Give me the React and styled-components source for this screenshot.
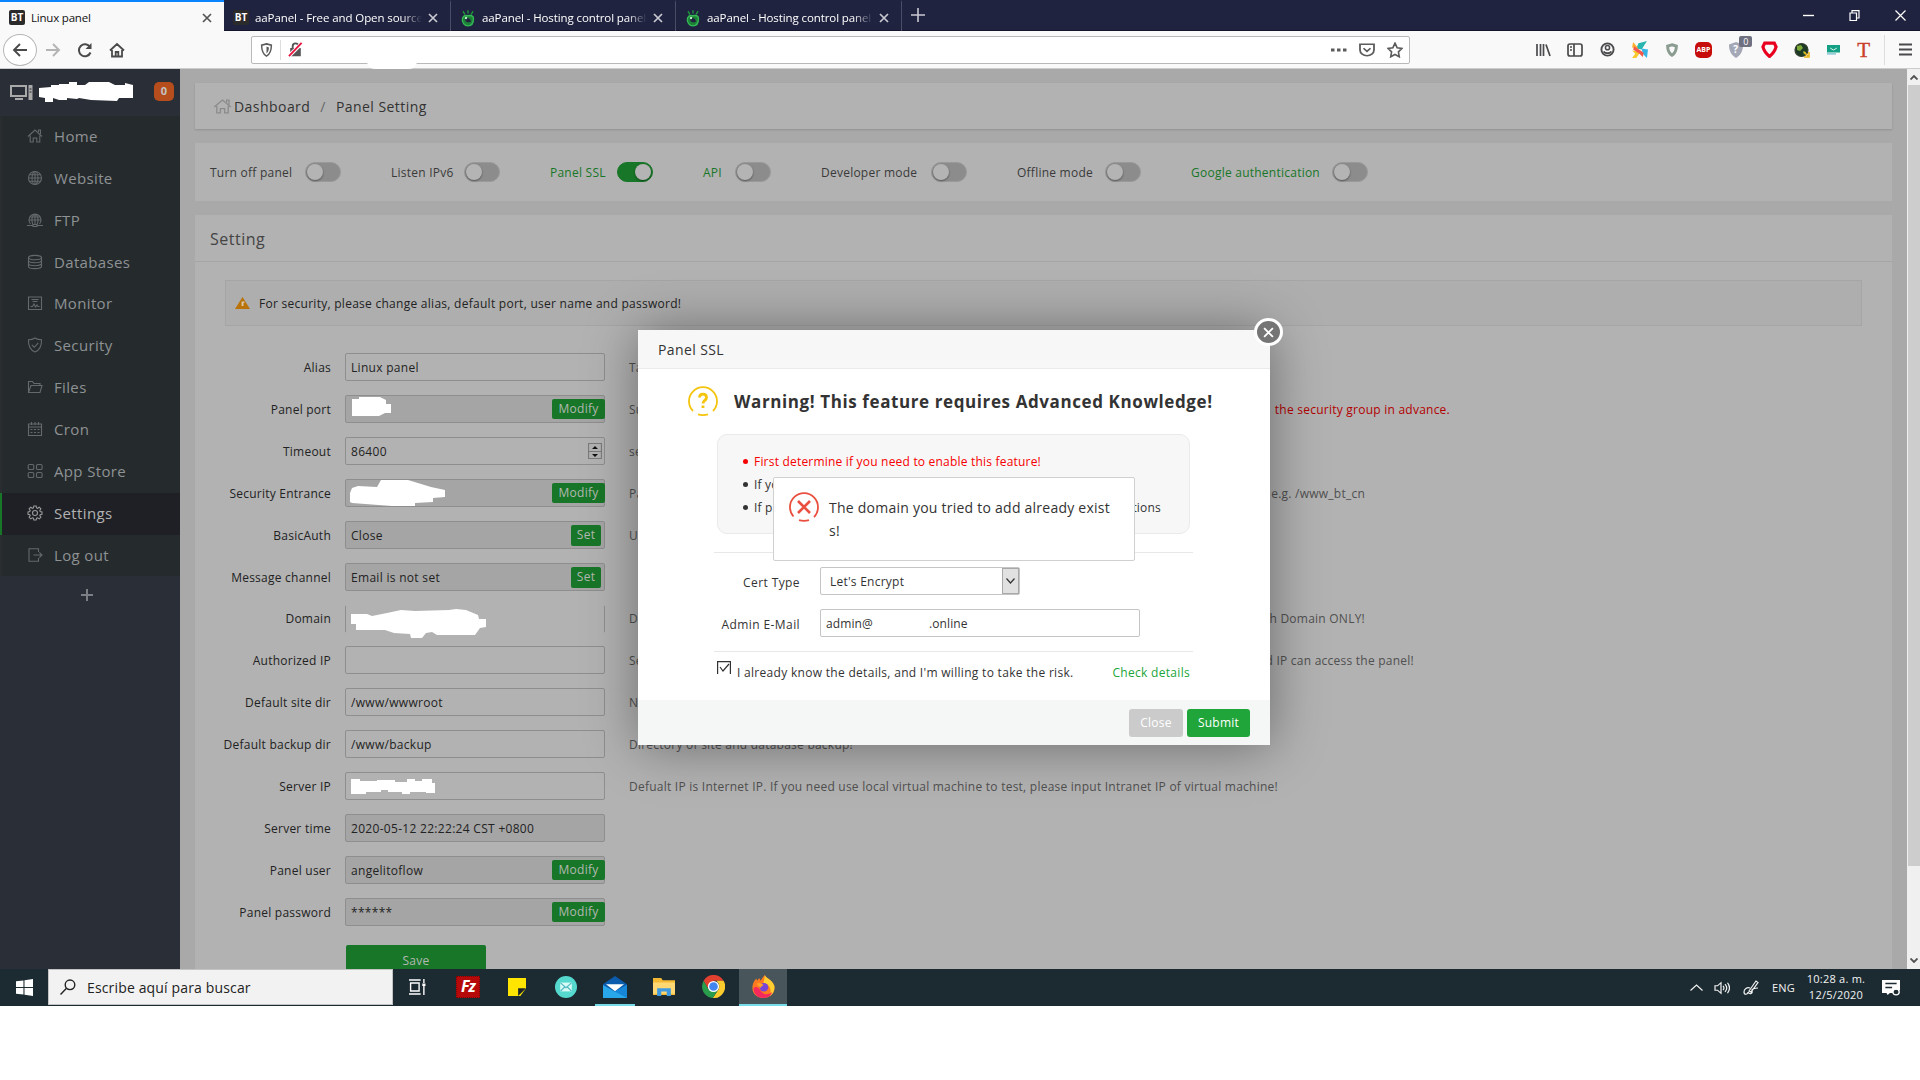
import React from "react";
import styled, { createGlobalStyle, css } from "styled-components";

const tabs = [
  { title: "Linux panel", icon: "bt", active: true, w: 224, ls: -0.2 },
  { title: "aaPanel - Free and Open source", icon: "bt", w: 227, ls: -0.1 },
  { title: "aaPanel - Hosting control panel", icon: "aa", w: 225, ls: -0.1 },
  { title: "aaPanel - Hosting control panel", icon: "aa", w: 226, ls: -0.1 },
];

const menu = [
  ["Home", "home"],
  ["Website", "globe"],
  ["FTP", "ftp"],
  ["Databases", "db"],
  ["Monitor", "monitor"],
  ["Security", "shield"],
  ["Files", "folder"],
  ["Cron", "cal"],
  ["App Store", "apps"],
  ["Settings", "gear"],
  ["Log out", "logout"],
];

const switches = [
  { label: "Turn off panel", w: 95 },
  { label: "Listen IPv6", w: 73 },
  { label: "Panel SSL", w: 67, green: true, on: true },
  { label: "API", w: 32, green: true },
  { label: "Developer mode", w: 110 },
  { label: "Offline mode", w: 88 },
  { label: "Google authentication", w: 141, green: true },
];

const rows = [
  { label: "Alias", value: "Linux panel", hint: "Take an alias" },
  {
    label: "Panel port",
    mask: "7,4 14,4 14,2 35,2 41,5 41,9 46,9 46,18 40,18 34,21 7,21",
    grey: true,
    button: "Modify",
    hint: "Suggested",
    tail: "the security group in advance.",
    tailW: 821,
    red: true,
  },
  { label: "Timeout", value: "86400", spin: true, hint: "seconds" },
  {
    label: "Security Entrance",
    mask: "5,14 7,9 13,7 32,8 36,1 63,1 86,8 100,11 100,18 88,19 88,23 70,24 70,27 47,27 7,24 5,23",
    grey: true,
    button: "Modify",
    hint: "Panel",
    tail: "e.g. /www_bt_cn",
    tailW: 736,
  },
  { label: "BasicAuth", value: "Close", grey: true, set: true, hint: "User" },
  { label: "Message channel", value: "Email is not set", grey: true, set: true },
  {
    label: "Domain",
    mask: "6,9 22,9 27,11 42,8 56,5 70,6 104,5 111,4 121,5 133,10 134,14 141,14 141,22 135,23 130,30 92,30 87,27 81,28 77,33 66,33 65,29 49,28 40,25 11,25 11,19 6,19",
    open: true,
    hint: "Domain",
    tail: "with Domain ONLY!",
    tailW: 736,
  },
  { label: "Authorized IP", hint: "Set", tail: "authorized IP can access the panel!", tailW: 785 },
  { label: "Default site dir", value: "/www/wwwroot", hint: "New" },
  { label: "Default backup dir", value: "/www/backup", hint: "Directory of site and database backup!" },
  {
    label: "Server IP",
    mask: "6,7 15,7 15,9 32,9 32,8 50,8 50,10 62,10 62,7 70,7 70,9 77,9 77,7 87,7 87,11 90,11 90,21 81,21 81,20 65,20 65,22 57,22 57,20 43,20 43,18 36,18 36,20 21,20 21,22 6,22",
    hint: "Defualt IP is Internet IP. If you need use local virtual machine to test, please input Intranet IP of virtual machine!",
  },
  { label: "Server time", value: "2020-05-12 22:22:24 CST +0800", grey: true },
  { label: "Panel user", value: "angelitoflow", grey: true, button: "Modify" },
  { label: "Panel password", value: "******", grey: true, button: "Modify" },
];

const Icon = ({ w = 16, h = w, box = "0 0 16 16", sw = 1.2, children, ...rest }) => (
  <svg
    width={w}
    height={h}
    viewBox={box}
    fill="none"
    stroke="currentColor"
    strokeWidth={sw}
    preserveAspectRatio="none"
    {...rest}
  >
    {children}
  </svg>
);

const menuPaths = {
  home: <path d="M1 8.5L8 2l7 6.5M3.2 7.5V14h3v-4h3.6v4h3V7.5M11.5 4V2h2v4" />,
  globe: (
    <>
      <circle cx="8" cy="8" r="6.5" />
      <ellipse cx="8" cy="8" rx="3" ry="6.5" />
      <path d="M8 1.5v13M1.5 8h13M2.5 4.8h11M2.5 11.2h11" />
    </>
  ),
  ftp: (
    <path d="M3.5 12A6 6 0 1 1 12.5 12M5.7 12c-1.3-4-1-8 2.3-10 3.3 2 3.6 6 2.3 10M8 2v10M2.5 8h11M3.5 5h9M0 13.5h6M10 13.5h6M6 12.5h4v2H6z" />
  ),
  db: (
    <>
      <ellipse cx="8" cy="3.6" rx="6.5" ry="2.2" />
      <path d="M1.5 3.6v8.8c0 1.2 3 2.2 6.5 2.2s6.5-1 6.5-2.2V3.6M1.5 6.6c0 1.2 3 2.2 6.5 2.2s6.5-1 6.5-2.2M1.5 9.5c0 1.2 3 2.2 6.5 2.2s6.5-1 6.5-2.2" />
    </>
  ),
  monitor: <path d="M1.5 2h13v12.5h-13zM4.5 4.5h7M5.5 6.5h5M3.5 11.5h2l1.5-2.5 1.5 3 1.5-2 1 1.5h1.5" />,
  shield: <path d="M8 1c2 1.3 4 1.8 6.5 1.8C14.8 9 13 13 8 15 3 13 1.2 9 1.5 2.8 4 2.8 6 2.3 8 1zM4.8 7.8l2.5 2.5 4-4.5" />,
  folder: <path d="M1.5 13.5v-11h4l1.5 2h6v2M1.5 13.5l2.5-7h11l-2 7z" />,
  cal: <path d="M1.5 3h13v11.5h-13zM1.5 6h13M4.5 1v3M8 1v3M11.5 1v3M3.5 8.5h2M7 8.5h2M10.5 8.5h2M3.5 11.5h2M7 11.5h2M10.5 11.5h2" />,
  apps: (
    <>
      <rect x="1.2" y="1.5" width="5.6" height="5" rx="1.3" />
      <rect x="9.5" y="1.5" width="5.6" height="5" rx="1.3" />
      <rect x="1.2" y="9.5" width="5.6" height="5" rx="1.3" />
      <rect x="9.5" y="9.5" width="5.6" height="5" rx="1.3" />
    </>
  ),
  gear: (
    <>
      <path d="M6.8 1h2.4l.4 1.9 1 .4 1.7-1.1 1.6 1.6-1.1 1.7.4 1 1.8.4v2.3l-1.8.4-.4 1 1.1 1.7-1.6 1.6-1.7-1.1-1 .4L9.2 15H6.8l-.4-1.8-1-.4-1.7 1.1-1.6-1.6 1.1-1.7-.4-1L1 9.2V6.9l1.8-.4.4-1-1.1-1.7 1.6-1.6 1.7 1.1 1-.4z" />
      <circle cx="8" cy="8" r="2.5" />
    </>
  ),
  logout: <path d="M11.5 5V1.8H2v12.4h9.5V11M6.5 8h8.5M12.3 5.3L15 8l-2.7 2.7" />,
};

const AaLogo = () => (
  <Icon w={16} h={18} sw={1.3}>
    <path d="M3 2l2 3M8 1v3M13 2l-2 3" stroke="#1d9a3c" />
    <path d="M2.5 8c1-2 3-2.5 5-2 3-.8 6 0 6 2.5 0 4-2 6.5-5.5 6.5s-6.5-3-5.500-7z" fill="#1b8236" stroke="#35b957" />
    <path d="M5 9.500c1 2.500 4 3 6 1.500-1-3-4-4-6-1.500z" fill="#20223f" stroke="none" />
    <circle cx="6" cy="8" r="1.2" fill="#b8e8c2" stroke="none" />
  </Icon>
);

const Close = ({ s = 10 }) => (
  <Icon w={s} h={s} box="0 0 10 10" sw={1.7}>
    <path d="M1 1l8 8M9 1L1 9" />
  </Icon>
);

function Browser() {
  return (
    <>
      <TabBar>
        {tabs.map((t, i) => (
          <Tab key={i} $active={t.active} $w={t.w}>
            {t.icon === "bt" ? <BtLogo>BT</BtLogo> : <AaLogo />}
            <TabTitle $ls={t.ls} $fade={!t.active}>{t.title}</TabTitle>
            <Close />
          </Tab>
        ))}
        <NewTab>
          <Icon w={14} box="0 0 14 14" sw={1.6}><path d="M7 0v14M0 7h14" /></Icon>
        </NewTab>
        <WindowButtons>
          <Icon w={11}><path d="M0 8h16" strokeWidth="2" /></Icon>
          <Icon w={11} box="0 0 11 11"><path d="M1 3h6.5v7.5H1zM3 3V.7h7V8H7.5" /></Icon>
          <Icon w={11} box="0 0 11 11"><path d="M.5.5l10 10M10.5.5l-10 10" /></Icon>
        </WindowButtons>
      </TabBar>
      <NavBar>
        <BackButton>
          <Icon w={16} sw={1.9}><path d="M15 8H2M8 2L2 8l6 6" /></Icon>
        </BackButton>
        <NavIcon $w={32} $c="#b4b4b4">
          <Icon w={16} sw={1.9}><path d="M1 8h13M8 2l6 6-6 6" /></Icon>
        </NavIcon>
        <NavIcon $w={32}>
          <Icon w={16} sw={2}><path d="M13.5 10.5A6 6 0 1 1 13 5" /><path d="M14.5 1v6h-6z" fill="currentColor" stroke="none" /></Icon>
        </NavIcon>
        <NavIcon $w={32}>
          <Icon w={16} sw={1.8}><path d="M1 8.5L8 2l7 6.5M3 8v6.5h10V8M6.7 14v-4h2.6v4" /></Icon>
        </NavIcon>
        <UrlBar>
          <Icon w={13} h={14} sw={1.8}><path d="M8 1l6 1.5c0 6-1.5 10-6 12.5C3.5 12.5 2 8.5 2 2.5z" /><path d="M8 4v8c2-2 3-4 3-7z" fill="currentColor" stroke="none" /></Icon>
          <UrlSplit />
          <Icon w={15} h={15}>
            <path d="M3 7h10v7.5H3z" fill="#555" stroke="#555" />
            <path d="M5 7V4.5a3 3 0 0 1 6 0V7" stroke="#555" strokeWidth="2" />
            <path d="M1 15L15 1" stroke="#fff" strokeWidth="4" />
            <path d="M1 15L14.5 1" stroke="#e8133f" strokeWidth="2" />
          </Icon>
          <UrlMask />
          <UrlActions>
            <Icon w={16} h={4} box="0 0 16 4"><path d="M0 2h3.5M6 2h3.5M12 2h3.5" strokeWidth="3.2" /></Icon>
            <Icon w={16} h={14} sw={1.8}><path d="M1 1.5h14V8c0 4-3.5 6.5-7 6.5S1 12 1 8zM4.5 6L8 9.5 11.5 6" /></Icon>
            <Icon w={16} h={16} sw={1.6}><path d="M8 1.2l2.1 4.5 4.9.7-3.6 3.5.9 4.9L8 12.5l-4.3 2.3.9-4.9L1 6.4l4.9-.7z" /></Icon>
          </UrlActions>
        </UrlBar>
        <Extensions>
          <Icon sw={1.7}><path d="M2 2v12M5.5 2v12M8.5 2v12M11 2.5L15 14" /></Icon>
          <Icon sw={1.7}><rect x="1" y="2" width="14" height="12" rx="2" /><path d="M7 2v12M3 5h2M3 8h2" /></Icon>
          <Icon w={15} sw={2}><circle cx="8" cy="8" r="6.5" /><circle cx="8" cy="6" r="2.2" strokeWidth="1.6" /><path d="M4 10c1 2.500 7 2.500 8 0" strokeWidth="1.800" /></Icon>
          <Icon w={17} stroke="none"><path d="M15 0L7 2 5 7l5 1z" fill="#29b6b0" /><path d="M2 1l5 6-6-1z" fill="#ffb02e" /><path d="M10 7l6 1-1 8-4-4z" fill="#36b5e6" /><path d="M1 9l8 1-4 6H1l3-4z" fill="#f8c92c" /><path d="M3 5l9 6-1 4-3-3-6-4z" fill="#f4594e" /></Icon>
          <Icon w={14} sw={3.4}><path d="M8 2l5 1.5c0 5-1 8-5 10.5-4-2.5-5-5.5-5-10.5z" stroke="#8b9c91" /></Icon>
          <Abp>ABP</Abp>
          <ShieldWrap>
            <Icon w={16} stroke="none"><path d="M8 0l7 2.5C15 9 13 13 8 16 3 13 1 9 1 2.5z" fill="#a4a8b6" /></Icon>
            <ShieldMark>?</ShieldMark>
            <Counter>0</Counter>
          </ShieldWrap>
          <Icon w={17} sw={3}><path d="M3.5 2h9l1.7 3.5c-1 3.5-3 6.5-6.2 9-3.2-2.5-5.2-5.5-6.2-9z" stroke="#e8001e" /></Icon>
          <Icon w={16}><circle cx="7.5" cy="8" r="6.5" fill="#1c3a26" stroke="#33402c" /><path d="M3 4l4-1 2 3-3 3-3-1zM9 9l3 1-2 3z" fill="#7da936" stroke="none" /><path d="M10 10l4 4M15 10v5h-5" stroke="#eab71c" strokeWidth="1.6" /></Icon>
          <Icon w={13} h={10}><path d="M0 0h16v12H0z" fill="#14a085" stroke="none" /><path d="M4 5l4 3 4-3" stroke="#fff" /><path d="M0 14h11" stroke="#94ccd9" strokeWidth="3" /></Icon>
          <LetterT>T</LetterT>
        </Extensions>
        <Burger>
          <Icon w={13} h={13} box="0 0 13 13"><path d="M0 1.5h13M0 6.5h13M0 11.5h13" strokeWidth="2" /></Icon>
        </Burger>
      </NavBar>
    </>
  );
}

function Sidebar() {
  return (
    <Side>
      <SideHead>
        <Icon w={23} h={15} box="0 0 23 15" sw={2} color="#a9a9aa">
          <path d="M1 1h15v10H1zM5 14h8" />
          <path d="M18.5 0h4v15h-4z" fill="currentColor" stroke="none" />
          <path d="M19.5 4h2M19.5 7h2" stroke="#2a2e36" strokeWidth="1" />
        </Icon>
        <svg width="94" height="20">
          <polygon
            fill="#fff"
            points="0,6 12,5 12,3 20,3 20,2 30,2 30,0 38,0 38,3 46,3 50,0 70,0 76,3 86,3 86,1 94,3 94,16 80,16 78,19 52,18 40,16 38,17 28,16 28,18 20,18 14,16 14,20 6,20 6,16 0,15"
          />
        </svg>
        <Badge>0</Badge>
      </SideHead>
      <Menu>
        {menu.map(([name, icon]) => (
          <MenuItem key={name} $active={name === "Settings"}>
            <Icon w={16} h={16} sw={1.1}>{menuPaths[icon]}</Icon>
            <span>{name}</span>
          </MenuItem>
        ))}
      </Menu>
      <AddMenu>
        <Icon w={12} box="0 0 12 12" sw={2}><path d="M6 0v12M0 6h12" /></Icon>
      </AddMenu>
    </Side>
  );
}

function SettingRow({ row }) {
  return (
    <Row $open={row.open}>
      <Label>{row.label}</Label>
      <Field $grey={row.grey} $open={row.open}>
        <span>{row.value}</span>
        {row.mask && (
          <Mask width="150" height="36">
            <polygon points={row.mask} fill="#fff" />
          </Mask>
        )}
        {row.button && <FieldButton>{row.button}</FieldButton>}
        {row.set && <FieldButton $set>Set</FieldButton>}
        {row.spin && (
          <Spin>
            <Icon w={14} h={16} box="0 0 14 16">
              <path d="M.5.5h13v15H.5zM0 8.5h14" stroke="#7b7b7b" />
              <path d="M4 6h6L7 3zM4 11h6l-3 3z" fill="#111" stroke="none" />
            </Icon>
          </Spin>
        )}
      </Field>
      <Hint $w={row.tailW}>
        <span>{row.hint}</span>
        {row.tail && <Tail $red={row.red}>{row.tail}</Tail>}
      </Hint>
    </Row>
  );
}

function SslDialog() {
  return (
    <Dialog>
      <DialogHead>Panel SSL</DialogHead>
      <DialogClose><Close s={11} /></DialogClose>
      <DialogBody>
        <WarnTitle>
          <Icon w={30} h={30} box="0 0 30 30" sw={1.8} color="#f5c40c">
            <path d="M5 25A14 14 0 1 1 25 25M10 28.3q5 1.6 10 0" />
            <path d="M11.5 11.5c0-4.5 7-4.5 7 0 0 3-3.5 2.8-3.5 6M15 19.5v2.5" strokeWidth="2.8" />
          </Icon>
          <h3>Warning! This feature requires Advanced Knowledge!</h3>
        </WarnTitle>
        <Notes>
          <Note $red>First determine if you need to enable this feature!</Note>
          <Note>If you</Note>
          <Note><span>If pa</span><NoteEnd>options</NoteEnd></Note>
        </Notes>
        <Rule />
        <FormLine>
          <FormLabel>Cert Type</FormLabel>
          <Select>
            Let's Encrypt
            <Arrow><Icon w={9} h={6} box="0 0 9 6"><path d="M.5.5l4 4.5 4-4.5" /></Icon></Arrow>
          </Select>
        </FormLine>
        <FormLine>
          <FormLabel>Admin E-Mail</FormLabel>
          <Email><span>admin@</span><span>.online</span></Email>
        </FormLine>
        <Rule />
        <Agree>
          <Icon w={14} h={14} box="0 0 14 14"><path d="M.6 13V.6h12.8V13M3 6l3 4 6-7" /></Icon>
          <span>I already know the details, and I'm willing to take the risk.</span>
          <a>Check details</a>
        </Agree>
      </DialogBody>
      <DialogFoot>
        <FootButton $w={54} $bg="#cbcbcb">Close</FootButton>
        <FootButton $w={63} $bg="#20a53a">Submit</FootButton>
      </DialogFoot>
      <Toast>
        <Icon w={30} h={30} box="0 0 30 30" sw={1.8} color="#e9503f">
          <path d="M4.5 24.5A14 14 0 1 1 25 25M10 28.2q5 1.5 10 0" />
          <path d="M9 9l12 12M21 9L9 21" strokeWidth="2.6" />
        </Icon>
        <p>The domain you tried to add already exist<br />s!</p>
      </Toast>
    </Dialog>
  );
}

function Taskbar() {
  return (
    <Bar>
      <Start>
        <Icon w={17} h={17} stroke="none"><path d="M0 2.2L7 1.3v6.2H0zM8 1.1L16 0v7.5H8zM0 8.5h7v6.2l-7-.9zM8 8.5h8V16l-8-1.1z" fill="#fff" /></Icon>
      </Start>
      <Search>
        <Icon w={16} h={16} sw={1.4}><circle cx="10" cy="5.8" r="4.8" /><path d="M6.5 9.3L.5 15.5" /></Icon>
        <span>Escribe aquí para buscar</span>
      </Search>
      <Apps>
        <TaskApp $w={48}>
          <Icon w={17} h={16} color="#fff"><path d="M0 1h11M0 15h11M1.5 4h8v8h-8zM14 0v4M14 7v9" strokeWidth="1.3" /><path d="M12.5 4.5h3V7h-3z" fill="#fff" stroke="none" /></Icon>
        </TaskApp>
        <TaskApp $w={54}><FileZilla>Fz</FileZilla></TaskApp>
        <TaskApp $w={44}>
          <Icon w={18} h={18} stroke="none"><path d="M0 0h16v9l-5 7H0z" fill="#ffe500" /><path d="M9 16V9h7z" fill="#1b2529" /></Icon>
        </TaskApp>
        <TaskApp $w={54}>
          <Icon w={22} h={22}><circle cx="8" cy="8" r="8" fill="#55d9cf" stroke="none" /><path d="M3.8 4.8h8.4v6.4H3.8z" fill="#d9fbf6" stroke="none" /><path d="M4 5l4 3.5L12 5M4 11l3-3M12 11L9 8" stroke="#4fb9c0" strokeWidth=".9" /></Icon>
        </TaskApp>
        <TaskApp $w={40} $open $gap={2}>
          <Icon w={24} h={22} stroke="none"><path d="M0 6l8-6 8 6v9H0z" fill="#0b5cad" /><path d="M2 6h12L8 11z" fill="#fff" /><path d="M0 6.5l8 5 8-5V16H0z" fill="#28a8ea" /><path d="M8 11.5l8-5V16z" fill="#1686d9" /></Icon>
        </TaskApp>
        <TaskApp $w={54} $gap={2}>
          <Icon w={22} h={18} stroke="none"><path d="M0 0h6l1 2h9v13H0z" fill="#f5ba33" /><path d="M0 4h16v10H0z" fill="#ffd874" /><path d="M3 16V9h10v7h-3v-4H6v4z" fill="#3f9ae0" /></Icon>
        </TaskApp>
        <TaskApp $w={45}>
          <Icon w={23} h={23} stroke="none"><path d="M1.1 4A8 8 0 0 1 15 4H8L4.6 10z" fill="#e2412f" /><path d="M15 4a8 8 0 0 1-7.5 12l4-6c1-2 .5-4-1.5-6z" fill="#fccb2e" /><path d="M1.1 4A8 8 0 0 0 7.5 16l3.8-6H4.6z" fill="#2a9d4c" /><circle cx="8" cy="8" r="3.9" fill="#fff" /><circle cx="8" cy="8" r="3" fill="#4284f0" /></Icon>
        </TaskApp>
        <TaskApp $w={48} $open $active $gap={3}>
          <Icon w={23} h={23} stroke="none"><path d="M5 2l1 2c1-2 2-3 3-4 0 2 5 3 6.5 7.5C16.5 12 13 16 8 16S0 12.5.3 8.5C.5 6 1.5 4 3 2.5L3.5 4z" fill="#ff7a1e" /><path d="M9 0c0 2 5 3 6.5 7.5.5 3-1 6-3 7 1.5-5-.5-8-4.5-9z" fill="#ffcf32" /><path d="M1 9c0 4 3 7 7 7 3 0 5.5-2 6-4-3 2-6 2-8-1S3 8 1 9z" fill="#f5295d" /><circle cx="8.3" cy="8.5" r="3" fill="#7744d8" /><path d="M3 6c2-1 4 0 5 1-1 1-2 1-2 2z" fill="#ffa02b" /></Icon>
        </TaskApp>
      </Apps>
      <Tray>
        <Icon w={13} h={7} box="0 0 13 7"><path d="M.5 6.5l6-5.5 6 5.5" /></Icon>
        <Icon w={16} h={14}><path d="M1 5.5h2.5L7 2v12L3.5 10.5H1zM9 5.5q2 2.5 0 5M11 3.5q3.5 4.5 0 9M13.5 2q4 6 0 12" /></Icon>
        <Icon w={16} h={16}><path d="M7 8c-3-1-6 1-6 4s4 3 4 0M6 11l7-10 2 1.5-7 9.5zM5 12c2 3 5 1 4-1s3-3 6-3" /></Icon>
        <Lang>ENG</Lang>
        <Clock><span>10:28 a. m.</span><span>12/5/2020</span></Clock>
        <Icon w={18} h={16} stroke="none">
          <path d="M0 0h16v10l-4 2-3 1H7l-2 2-1-2H0z" fill="#fff" />
          <path d="M3 3.5h10M3 7.5h6" stroke="#1c2a32" strokeWidth="1.3" />
          <circle cx="12.5" cy="12" r="2.8" fill="#1c2a32" stroke="#fff" />
        </Icon>
      </Tray>
    </Bar>
  );
}

export default function App() {
  return (
    <Screen>
      <Global />
      <Browser />
      <Page>
        <Sidebar />
        <Main>
          <Crumbs>
            <Icon w={19} h={17} color="#8b8b8b" sw={1.1}>{menuPaths.home}</Icon>
            <span>Dashboard</span>
            <Slash>/</Slash>
            <span>Panel Setting</span>
          </Crumbs>
          <SwitchCard>
            {switches.map((s) => (
              <SwitchItem key={s.label}>
                <SwitchLabel $w={s.w} $green={s.green}>{s.label}</SwitchLabel>
                <Toggle $on={s.on} />
              </SwitchItem>
            ))}
          </SwitchCard>
          <SettingCard>
            <CardTitle>Setting</CardTitle>
            <Alert>
              <Icon w={15} h={12} stroke="none"><path d="M8 0l8 16H0z" fill="#b97308" /><path d="M7 6h3v2H9v4H7z" fill="#d9c9a8" /></Icon>
              For security, please change alias, default port, user name and password!
            </Alert>
            <Rows>
              {rows.map((r) => <SettingRow key={r.label} row={r} />)}
            </Rows>
            <Save>Save</Save>
          </SettingCard>
        </Main>
        <Scrollbar>
          <Icon w={8} h={5} box="0 0 8 5" sw={1.8}><path d="M.5 4.5L4 1l3.5 3.5" /></Icon>
          <Thumb />
          <Icon w={8} h={5} box="0 0 8 5" sw={1.8}><path d="M.5.5L4 4 7.5.5" /></Icon>
        </Scrollbar>
        <SslDialog />
      </Page>
      <Taskbar />
    </Screen>
  );
}

// Styled Components
const Global = createGlobalStyle`
  * { box-sizing: border-box; }
  body {
    margin: 0;
    background: #fff;
    font-family: "Open Sans", "Noto Sans", sans-serif;
    font-size: 12px;
    letter-spacing: 0.24px;
    overflow: hidden;
  }
  svg { display: block; flex-shrink: 0; }
  h3, p { margin: 0; }
`;

const Screen = styled.div`
  width: 1920px;
  height: 1080px;
  display: flex;
  flex-direction: column;
  white-space: nowrap;
`;

const TabBar = styled.div`
  height: 31px;
  flex-shrink: 0;
  display: flex;
  background: #202340;
  border-bottom: 1px solid #14152a;
  color: #fff;
`;

const Tab = styled.div`
  width: ${(p) => p.$w}px;
  height: 31px;
  display: flex;
  align-items: center;
  padding: 2px 12px 0 9px;
  gap: 6px;
  border-top: 2px solid transparent;
  border-right: 1px solid #4b4d66;
  svg:last-child { color: #c9c9d2; }
  ${(p) =>
    p.$active &&
    css`
      background: #f9f9fa;
      color: #111;
      border-top-color: #0a84ff;
      border-right: 0;
      svg:last-child { color: #555; }
    `}
`;

const BtLogo = styled.div`
  width: 16px;
  height: 15px;
  flex-shrink: 0;
  border-radius: 2px;
  background: #2b2b2b;
  color: #fff;
  font: bold 10px/15px "Open Sans", sans-serif;
  letter-spacing: 0;
  text-align: center;
`;

const TabTitle = styled.span`
  flex: 1;
  overflow: hidden;
  font-size: 11.5px;
  letter-spacing: ${(p) => p.$ls}px;
  ${(p) => p.$fade && "mask-image: linear-gradient(to right, #000 88%, transparent);"}
`;

const NewTab = styled.div`
  width: 32px;
  display: grid;
  place-items: center;
  color: #c9c9d2;
`;

const WindowButtons = styled.div`
  margin-left: auto;
  padding-right: 14px;
  display: flex;
  align-items: center;
  gap: 35px;
`;

const NavBar = styled.div`
  height: 38px;
  flex-shrink: 0;
  display: flex;
  align-items: center;
  background: #f9f9fa;
  border-bottom: 1px solid #ccc;
  color: #4a4a4c;
  padding-left: 3px;
`;

const BackButton = styled.div`
  width: 34px;
  height: 32px;
  border: 1px solid #b5b5b5;
  border-radius: 50%;
  background: #fff;
  display: grid;
  place-items: center;
`;

const NavIcon = styled.div`
  width: ${(p) => p.$w}px;
  color: ${(p) => p.$c || "inherit"};
  display: grid;
  place-items: center;
`;

const UrlBar = styled.div`
  position: relative;
  width: 1159px;
  height: 28px;
  margin-left: 118px;
  padding: 0 6px 0 8px;
  background: #fff;
  border: 1px solid #b9b9bb;
  border-radius: 2px;
  display: flex;
  align-items: center;
  color: #5b5b5d;
`;

const UrlSplit = styled.div`
  width: 1px;
  height: 20px;
  margin: 0 7px;
  background: #ddd;
`;

const UrlMask = styled.div`
  position: absolute;
  left: 115px;
  top: 24px;
  width: 50px;
  height: 8px;
  background: #fff;
  border-radius: 0 0 14px 14px;
`;

const UrlActions = styled.div`
  margin-left: auto;
  display: flex;
  align-items: center;
  gap: 12px;
`;

const Extensions = styled.div`
  margin-left: auto;
  width: 337px;
  display: flex;
  align-items: center;
  justify-content: space-between;
`;

const Abp = styled.div`
  width: 17px;
  height: 16px;
  border-radius: 5px;
  background: #c70d0a;
  color: #fff;
  font: bold 7px/16px "Open Sans", sans-serif;
  letter-spacing: 0;
  text-align: center;
`;

const ShieldWrap = styled.div`
  position: relative;
  width: 16px;
`;

const ShieldMark = styled.span`
  position: absolute;
  left: 5px;
  top: 1px;
  color: #fff;
  font-size: 10px;
  font-weight: bold;
  line-height: 13px;
`;

const Counter = styled.span`
  position: absolute;
  left: 11px;
  top: -6px;
  width: 13px;
  height: 11px;
  border-radius: 2px;
  background: #6f7080;
  color: #fff;
  font-size: 9px;
  line-height: 11px;
  text-align: center;
`;

const LetterT = styled.span`
  width: 16px;
  text-align: center;
  color: #c9402a;
  font: 21px/18px "Liberation Serif", serif;
  -webkit-text-stroke: 0.4px #c9402a;
`;

const Burger = styled.div`
  width: 36px;
  height: 30px;
  margin-left: 12px;
  padding-left: 5px;
  border-left: 1px solid #ddd;
  display: grid;
  place-items: center;
`;

const Page = styled.div`
  position: relative;
  height: 900px;
  flex-shrink: 0;
  display: flex;
  overflow: hidden;
  background: #a9a9a9;
`;

const Side = styled.div`
  width: 180px;
  background: #2a2e36;
  flex-shrink: 0;
`;

const SideHead = styled.div`
  height: 47px;
  padding: 0 6px 1px 10px;
  display: flex;
  align-items: center;
  gap: 6px;
`;

const Badge = styled.div`
  width: 20px;
  height: 19px;
  margin: 0 0 1px auto;
  border-radius: 5px;
  background: #b54e1c;
  color: #c4c4c4;
  font-size: 11px;
  font-weight: bold;
  line-height: 18px;
  text-align: center;
`;

const Menu = styled.div`
  background: #252a2d;
`;

const MenuItem = styled.div`
  height: 41.87px;
  display: flex;
  align-items: center;
  gap: 11px;
  padding: 0 0 2px 25px;
  border-left: 2px solid ${(p) => (p.$active ? "#187628" : "#2a2d30")};
  background: ${(p) => (p.$active ? "#1e2025" : "transparent")};
  color: ${(p) => (p.$active ? "#b2b2b2" : "#8e9294")};
  font-size: 15px;
  letter-spacing: 0.35px;
  svg { color: ${(p) => (p.$active ? "#999" : "#65696b")}; }
`;

const AddMenu = styled.div`
  height: 38px;
  padding-right: 6px;
  display: grid;
  place-items: center;
  color: #7c7f84;
`;

const Main = styled.div`
  width: 1697px;
  margin-left: 15px;
  padding-top: 14px;
  display: flex;
  flex-direction: column;
  gap: 14px;
`;

const Card = styled.div`
  background: #b2b2b2;
  flex-shrink: 0;
  color: #333;
`;

const Crumbs = styled(Card)`
  height: 46px;
  padding-left: 18px;
  box-shadow: 0 1px 2px rgba(0, 0, 0, 0.15);
  display: flex;
  align-items: center;
  font-size: 14px;
  letter-spacing: 0.45px;
  svg { margin-right: 2px; }
`;

const Slash = styled.span`
  margin: 0 10px;
  color: #666;
`;

const SwitchCard = styled(Card)`
  height: 58px;
  padding-left: 15px;
  display: flex;
  align-items: center;
  gap: 50px;
`;

const SwitchItem = styled.div`
  display: flex;
  align-items: center;
`;

const SwitchLabel = styled.span`
  width: ${(p) => p.$w}px;
  color: ${(p) => (p.$green ? "#187628" : "#3a3a3a")};
`;

const Toggle = styled.div`
  width: 36px;
  height: 20px;
  padding: 1px;
  border-radius: 10px;
  border: 1px solid ${(p) => (p.$on ? "#187628" : "#999")};
  background: ${(p) => (p.$on ? "#187628" : "#8c8c8c")};
  display: flex;
  justify-content: ${(p) => (p.$on ? "flex-end" : "flex-start")};
  &::before {
    content: "";
    width: 16px;
    height: 16px;
    border-radius: 50%;
    background: #b4b4b4;
    box-shadow: 0 1px 2px rgba(0, 0, 0, 0.4);
  }
`;

const SettingCard = styled(Card)`
  height: 800px;
`;

const CardTitle = styled.div`
  height: 47px;
  padding-left: 15px;
  border-bottom: 1px solid #a5a5a5;
  color: #444;
  font-size: 16px;
  line-height: 49px;
  letter-spacing: 0.5px;
`;

const Alert = styled.div`
  height: 46px;
  margin: 18px 30px 27px;
  padding-left: 9px;
  border: 1px solid #a5a5a5;
  background: #aeaeae;
  display: flex;
  align-items: center;
  gap: 9px;
  color: #222;
  letter-spacing: 0.27px;
`;

const Rows = styled.div`
  display: flex;
  flex-direction: column;
  gap: 14px;
`;

const Row = styled.div`
  height: ${(p) => (p.$open ? 27 : 28)}px;
  display: flex;
  align-items: center;
`;

const Label = styled.div`
  width: 136px;
  margin-right: 14px;
  text-align: right;
  color: #222;
`;

const Field = styled.div`
  position: relative;
  width: 260px;
  height: 28px;
  padding: 0 0 0 5px;
  border: 1px solid #8e8e8e;
  border-radius: 2px;
  background: ${(p) => (p.$grey ? "#a5a5a5" : "#b2b2b2")};
  color: #222;
  display: flex;
  align-items: center;
  letter-spacing: 0.3px;
  ${(p) => p.$open && "border-top-color: transparent; border-bottom-color: transparent;"}
`;

const Mask = styled.svg`
  position: absolute;
  left: -1px;
  top: -1px;
`;

const FieldButton = styled.div`
  width: ${(p) => (p.$set ? 30 : 53)}px;
  height: ${(p) => (p.$set ? 21 : 20)}px;
  margin: 0 ${(p) => (p.$set ? 3 : -1)}px 0 auto;
  border-radius: 2px;
  background: #187628;
  color: #b2b8b2;
  line-height: 20px;
  text-align: center;
`;

const Spin = styled.div`
  margin: 0 2px 0 auto;
`;

const Hint = styled.div`
  width: ${(p) => (p.$w ? `${p.$w}px` : "auto")};
  margin-left: 24px;
  display: flex;
  justify-content: space-between;
  color: #505050;
`;

const Tail = styled.span`
  color: ${(p) => (p.$red ? "#b20000" : "inherit")};
`;

const Save = styled.div`
  width: 140px;
  height: 34px;
  margin: 19px 0 0 151px;
  border-radius: 2px;
  background: #187628;
  color: #b2b8b2;
  line-height: 32px;
  text-align: center;
`;

const Scrollbar = styled.div`
  width: 13px;
  margin-left: auto;
  padding: 6px 0;
  background: #f0f0f0;
  color: #505050;
  display: flex;
  flex-direction: column;
  align-items: center;
  justify-content: space-between;
`;

const Thumb = styled.div`
  width: 12px;
  height: 781px;
  margin: 5px 0 auto;
  background: #cdcdcd;
`;

const Dialog = styled.div`
  position: absolute;
  left: 638px;
  top: 261px;
  width: 632px;
  height: 415px;
  display: flex;
  flex-direction: column;
  background: #fff;
  box-shadow: 1px 1px 50px rgba(0, 0, 0, 0.4);
  color: #333;
`;

const DialogHead = styled.div`
  height: 39px;
  padding-left: 20px;
  background: #f7f7f7;
  border-bottom: 1px solid #eaeaea;
  font-size: 14px;
  line-height: 39px;
  letter-spacing: 0.4px;
`;

const DialogClose = styled.div`
  position: absolute;
  right: -13px;
  top: -12px;
  width: 29px;
  height: 28px;
  border: 3px solid #fff;
  border-radius: 50%;
  background: #757575;
  color: #fff;
  display: grid;
  place-items: center;
`;

const DialogBody = styled.div`
  height: 331px;
  padding: 17px 77px 0 76px;
`;

const WarnTitle = styled.div`
  height: 30px;
  margin-left: -26px;
  display: flex;
  align-items: center;
  gap: 16px;
  h3 {
    font-size: 17px;
    font-weight: bold;
    letter-spacing: 0.6px;
  }
`;

const Notes = styled.div`
  width: 473px;
  height: 100px;
  margin: 18px 0 18px 3px;
  padding: 15px 28px 0 36px;
  border: 1px solid #eaeaea;
  border-radius: 10px;
  background: #f7f7f7;
`;

const Note = styled.div`
  display: flex;
  position: relative;
  line-height: 23px;
  letter-spacing: 0.2px;
  color: ${(p) => (p.$red ? "#f60000" : "#333")};
  &::before {
    content: "";
    position: absolute;
    left: -11px;
    top: 9px;
    width: 5px;
    height: 5px;
    border-radius: 50%;
    background: currentColor;
  }
`;

const NoteEnd = styled.span`
  margin-left: auto;
`;

const Rule = styled.div`
  height: 1px;
  background: #e8e8e8;
`;

const FormLine = styled.div`
  height: 28px;
  margin: 14px 0;
  display: flex;
  align-items: center;
`;

const FormLabel = styled.div`
  width: 86px;
  margin-right: 20px;
  padding-top: 2px;
  text-align: right;
  letter-spacing: 0.4px;
`;

const Select = styled.div`
  width: 200px;
  height: 28px;
  padding-left: 9px;
  border: 1px solid #c5c5c5;
  border-radius: 2px;
  display: flex;
  align-items: center;
  justify-content: space-between;
`;

const Arrow = styled.div`
  width: 17px;
  height: 26px;
  border: 1px solid #a8a8a8;
  background: #e1e1e1;
  display: grid;
  place-items: center;
`;

const Email = styled.div`
  width: 320px;
  height: 28px;
  padding-left: 5px;
  border: 1px solid #c5c5c5;
  border-radius: 2px;
  display: flex;
  align-items: center;
  letter-spacing: 0.1px;
  span:first-child { width: 103px; }
`;

const Agree = styled.div`
  height: 40px;
  padding: 0 3px;
  display: flex;
  align-items: center;
  gap: 6px;
  letter-spacing: 0.3px;
  svg { margin-top: -8px; }
  a {
    margin-left: auto;
    color: #20a53a;
  }
`;

const DialogFoot = styled.div`
  height: 45px;
  padding-right: 20px;
  background: #f4f7f6;
  display: flex;
  align-items: center;
  justify-content: flex-end;
  gap: 4px;
`;

const FootButton = styled.div`
  width: ${(p) => p.$w}px;
  height: 28px;
  border-radius: 3px;
  background: ${(p) => p.$bg};
  color: #fff;
  line-height: 28px;
  text-align: center;
`;

const Toast = styled.div`
  position: absolute;
  left: 135px;
  top: 147px;
  width: 362px;
  height: 84px;
  padding: 14px 0 0 15px;
  border: 1px solid #d0d0d0;
  border-radius: 2px;
  background: #fff;
  display: flex;
  gap: 10px;
  p {
    padding-top: 4px;
    font-size: 14px;
    line-height: 23px;
  }
`;

const Bar = styled.div`
  height: 37px;
  flex-shrink: 0;
  display: flex;
  background: #1c2a32;
  color: #fff;
`;

const Start = styled.div`
  width: 48px;
  display: grid;
  place-items: center;
`;

const Search = styled.div`
  width: 345px;
  height: 36px;
  padding-left: 11px;
  border: 1px solid #c3c3c3;
  background: #f2f2f2;
  color: #222;
  display: flex;
  align-items: center;
  gap: 11px;
  font-size: 14px;
  letter-spacing: 0.15px;
`;

const Apps = styled.div`
  display: flex;
`;

const TaskApp = styled.div`
  width: ${(p) => p.$w}px;
  height: 37px;
  margin-left: ${(p) => p.$gap || 0}px;
  display: grid;
  place-items: center;
  background: ${(p) => (p.$active ? "#48565c" : "transparent")};
  border-bottom: 2px solid ${(p) => (p.$open ? "#76dce8" : "transparent")};
`;

const FileZilla = styled.div`
  width: 24px;
  height: 22px;
  border: 1px dotted #7a0505;
  background: #b60a0a;
  font: italic bold 16px/19px "Open Sans", sans-serif;
  letter-spacing: -1px;
  text-align: center;
`;

const Tray = styled.div`
  margin-left: auto;
  padding-right: 20px;
  display: flex;
  align-items: center;
  color: #f2f2f2;
  svg { margin-right: 11px; }
  svg:nth-child(2), svg:nth-child(3) { margin-right: 13px; }
  svg:last-child { margin-right: 0; }
`;

const Lang = styled.span`
  width: 34px;
  font-size: 11px;
`;

const Clock = styled.div`
  width: 60px;
  margin-right: 16px;
  display: flex;
  flex-direction: column;
  align-items: center;
  padding-bottom: 2px;
  font-size: 11px;
  line-height: 16px;
`;
